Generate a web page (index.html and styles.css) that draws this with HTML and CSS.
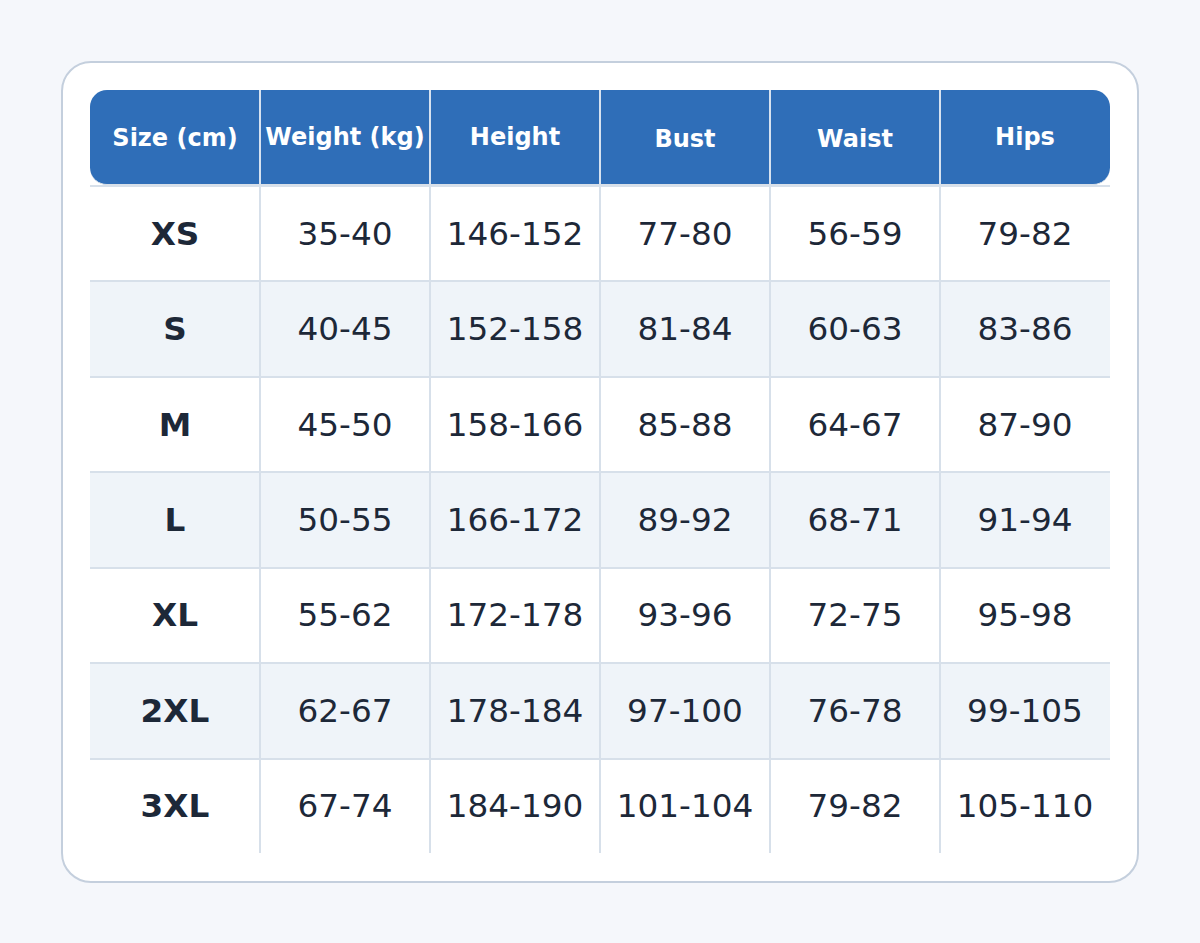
FILE: index.html
```html
<!DOCTYPE html>
<html>
<head>
<meta charset="utf-8">
<link rel="stylesheet" href="styles.css">
</head>
<body>
<div class="card">
  <div class="table">
    <div class="head">
      <div class="hcell">Size (cm)</div>
      <div class="hcell up">Weight (kg)</div>
      <div class="hcell up">Height</div>
      <div class="hcell down">Bust</div>
      <div class="hcell down">Waist</div>
      <div class="hcell up">Hips</div>
    </div>
    <div class="row"><div class="cell size">XS</div><div class="cell">35-40</div><div class="cell">146-152</div><div class="cell">77-80</div><div class="cell">56-59</div><div class="cell">79-82</div></div>
    <div class="row alt"><div class="cell size">S</div><div class="cell">40-45</div><div class="cell">152-158</div><div class="cell">81-84</div><div class="cell">60-63</div><div class="cell">83-86</div></div>
    <div class="row"><div class="cell size">M</div><div class="cell">45-50</div><div class="cell">158-166</div><div class="cell">85-88</div><div class="cell">64-67</div><div class="cell">87-90</div></div>
    <div class="row alt"><div class="cell size">L</div><div class="cell">50-55</div><div class="cell">166-172</div><div class="cell">89-92</div><div class="cell">68-71</div><div class="cell">91-94</div></div>
    <div class="row"><div class="cell size">XL</div><div class="cell">55-62</div><div class="cell">172-178</div><div class="cell">93-96</div><div class="cell">72-75</div><div class="cell">95-98</div></div>
    <div class="row alt"><div class="cell size">2XL</div><div class="cell">62-67</div><div class="cell">178-184</div><div class="cell">97-100</div><div class="cell">76-78</div><div class="cell">99-105</div></div>
    <div class="row last"><div class="cell size">3XL</div><div class="cell">67-74</div><div class="cell">184-190</div><div class="cell">101-104</div><div class="cell">79-82</div><div class="cell">105-110</div></div>
  </div>
</div>
</body>
</html>
```
FILE: styles.css
```css
* { box-sizing: border-box; }
html, body { margin: 0; padding: 0; }
body {
  background: #f5f7fb;
  font-family: "DejaVu Sans", sans-serif;
  width: 1200px;
  height: 943px;
  padding: 61px;
}
.card {
  width: 1078px;
  height: 822px;
  background: #ffffff;
  border: 2px solid #c4cfdd;
  border-radius: 30px;
  padding: 27px 27px;
}
.table {
  width: 1020px;
  display: grid;
  grid-template-rows: 95px repeat(7, 95.43px);
}
.head {
  display: grid;
  grid-template-columns: repeat(6, 170px);
  background: #2f6eb8;
  border-radius: 17px;
  border-bottom: 1px solid #d9e0e8;
  overflow: hidden;
}
.hcell {
  display: flex;
  align-items: center;
  justify-content: center;
  color: #ffffff;
  font-weight: bold;
  font-size: 24px;
  padding-top: 2px;
  white-space: nowrap;
}
.hcell + .hcell { box-shadow: -1px 0 0 #d7e2f0, inset 1px 0 0 #d7e2f0; }
.hcell.up { padding-top: 0; padding-bottom: 1px; }
.hcell.down { padding-top: 4px; }
.row {
  display: grid;
  grid-template-columns: repeat(6, 170px);
  border-top: 2px solid #d7e0ea;
}
.row.alt { background: #eff4f9; }
.cell {
  display: flex;
  align-items: center;
  justify-content: center;
  color: #1d2838;
  font-size: 32.7px;
  white-space: nowrap;
}
.cell + .cell { box-shadow: -1px 0 0 #d7e0ea, inset 1px 0 0 #d7e0ea; }
.cell.size { font-weight: bold; }
```
